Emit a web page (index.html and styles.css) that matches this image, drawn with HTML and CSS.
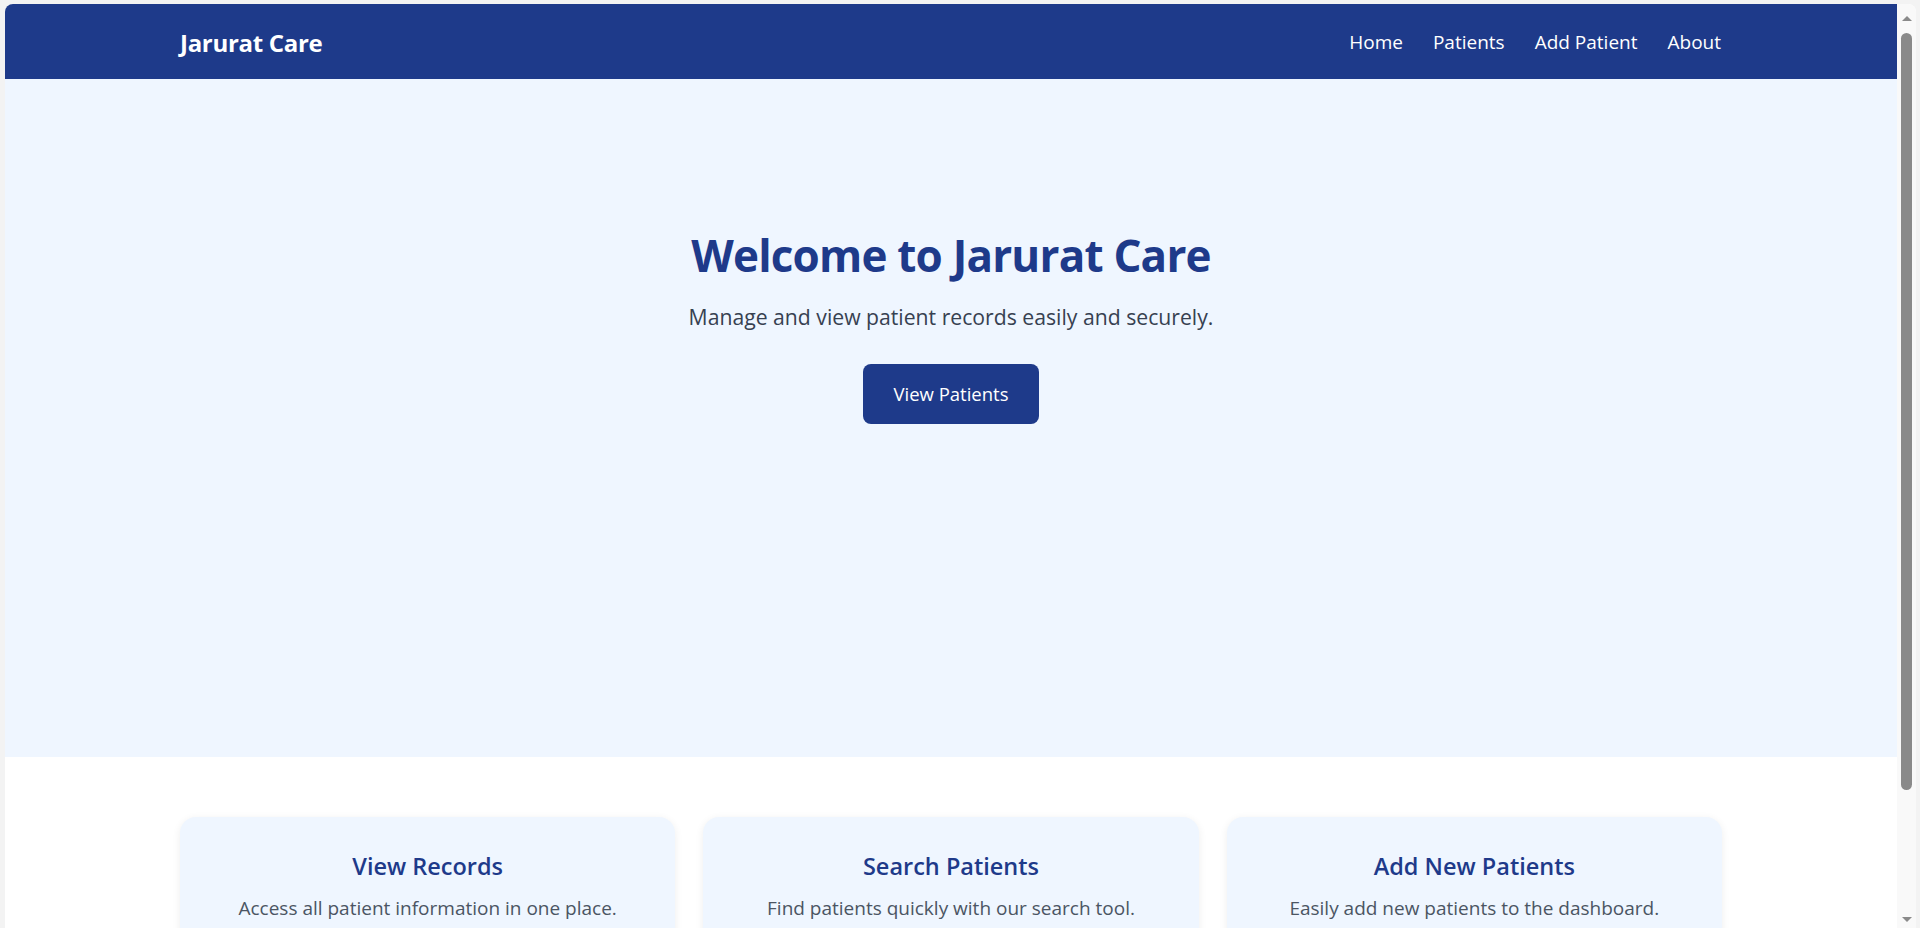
FILE: index.html
```html
<!DOCTYPE html>
<html lang="en">
<head>
<meta charset="utf-8">
<title>Jarurat Care</title>
<link rel="stylesheet" href="styles.css">
</head>
<body>
<div class="window">
  <div class="page">
    <header class="navbar">
      <div class="container nav-inner">
        <a class="brand" href="#">Jarurat Care</a>
        <nav class="nav-links">
          <a href="#">Home</a>
          <a href="#">Patients</a>
          <a href="#">Add Patient</a>
          <a href="#">About</a>
        </nav>
      </div>
    </header>
    <section class="hero">
      <h1 class="hero-title">Welcome to Jarurat Care</h1>
      <p class="hero-sub">Manage and view patient records easily and securely.</p>
      <a class="btn" href="#">View Patients</a>
    </section>
    <section class="features">
      <div class="container cards">
        <div class="card">
          <h3 class="card-title">View Records</h3>
          <p class="card-text">Access all patient information in one place.</p>
        </div>
        <div class="card">
          <h3 class="card-title">Search Patients</h3>
          <p class="card-text">Find patients quickly with our search tool.</p>
        </div>
        <div class="card">
          <h3 class="card-title">Add New Patients</h3>
          <p class="card-text">Easily add new patients to the dashboard.</p>
        </div>
      </div>
    </section>
  </div>
  <div class="scrollbar">
    <span class="arrow arrow-up"></span>
    <span class="thumb"></span>
    <span class="track-rest"></span>
    <span class="arrow arrow-down"></span>
  </div>
</div>
</body>
</html>
```

FILE: styles.css
```css
* { box-sizing: border-box; }
html, body { margin: 0; height: 100%; }
body {
  background: #f3f3f3;
  font-family: "Open Sans", "Noto Sans", Arial, sans-serif;
  overflow: hidden;
  display: flex;
  padding: 4px 4px 0 5px;
}
.window {
  flex: 1;
  display: flex;
  background: #ffffff;
  border-radius: 8px 8px 0 0;
  overflow: hidden;
}
.page {
  flex: 1;
  min-width: 0;
  overflow: hidden;
}
.container {
  width: 1542px;
  margin: 0 auto;
}
.navbar {
  background: #1e3a8a;
  height: 75px;
  display: flex;
  align-items: center;
  padding-top: 1px;
}
.nav-inner {
  display: flex;
  align-items: center;
  justify-content: space-between;
}
.brand {
  color: #ffffff;
  text-decoration: none;
  font-weight: 700;
  font-size: 24px;
  letter-spacing: -0.3px;
}
.nav-links {
  display: flex;
  gap: 30px;
  padding-right: 1px;
}
.nav-links a {
  color: #ffffff;
  text-decoration: none;
  font-size: 19px;
}
.hero {
  background: #eff6ff;
  height: 678px;
  display: flex;
  flex-direction: column;
  align-items: center;
  padding-top: 150px;
}
.hero-title {
  margin: 0;
  color: #1e3a8a;
  font-size: 44px;
  font-weight: 700;
  line-height: 1.2;
  letter-spacing: -0.8px;
}
.hero-sub {
  margin: 20px 0 0;
  color: #374151;
  font-size: 21.2px;
}
.btn {
  margin-top: 33px;
  display: inline-block;
  background: #1e3a8a;
  color: #ffffff;
  text-decoration: none;
  font-size: 18.5px;
  line-height: 26px;
  padding: 17px 30px;
  border-radius: 8px;
}
.features {
  padding-top: 60px;
}
.cards {
  display: grid;
  grid-template-columns: repeat(3, 1fr);
  gap: 28px;
}
.card {
  background: #eff6ff;
  border-radius: 16px;
  box-shadow: 0 2px 8px rgba(0, 0, 0, 0.07);
  padding: 33px 24px 40px;
  text-align: center;
}
.card-title {
  margin: 0;
  color: #1e3a8a;
  font-size: 23.5px;
  font-weight: 600;
}
.card-text {
  margin: 13px 0 0;
  color: #4b5563;
  font-size: 19px;
}
.scrollbar {
  width: 19px;
  background: #f9f9f9;
  display: flex;
  flex-direction: column;
  align-items: center;
  padding: 12px 0 6px;
}
.arrow {
  width: 0;
  height: 0;
  border-left: 5px solid transparent;
  border-right: 5px solid transparent;
}
.arrow-up { border-bottom: 5px solid #8a8a8a; }
.arrow-down { border-top: 5px solid #8a8a8a; }
.thumb {
  margin-top: 12px;
  width: 11px;
  height: 757px;
  background: #8a8a8a;
  border-radius: 6px;
}
.track-rest { flex: 1; }
```
